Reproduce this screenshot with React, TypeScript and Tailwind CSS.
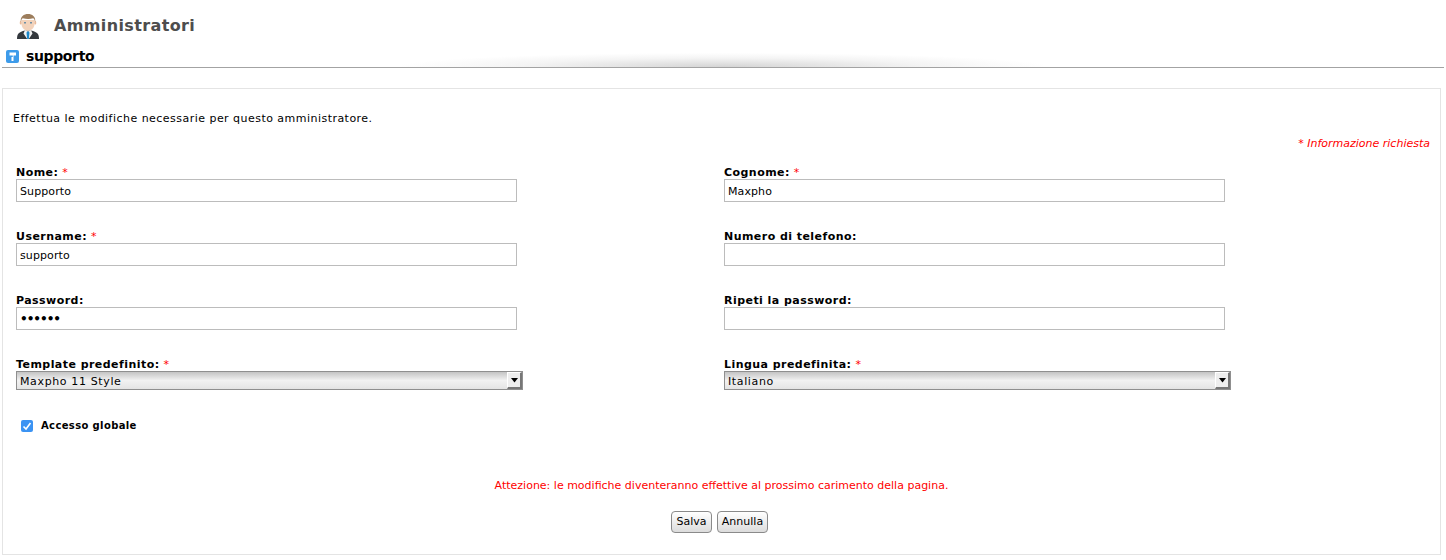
import React from 'react';

const Label: React.FC<{ text: string; required?: boolean }> = ({ text, required }) => (
    <label className="block h-[13px] text-[11px] leading-[13px] font-bold text-black tracking-[0.45px]">
        {text}
        {required && <span className="font-normal text-[#f00]"> *</span>}
    </label>
);

const Input: React.FC<{ value?: string; password?: boolean }> = ({ value = '', password }) => (
    <input
        type={password ? 'password' : 'text'}
        defaultValue={value}
        className={`block w-[501px] h-[23px] border border-[#bcbcbc] bg-white px-[3px] pt-[1px] text-black outline-none ${password ? 'text-[12px] tracking-[-1px] font-bold' : 'text-[11px] tracking-[0.1px]'}`}
    />
);

const Select: React.FC<{ value: string }> = ({ value }) => (
    <div className="flex w-[507px] h-[19px] border border-[#8f8f8f] bg-gradient-to-b from-[#c4c4c4] via-[#f2f2f2] to-[#e4e4e4] text-[11px] leading-[19px] text-black">
        <span className="flex-1 pl-[3px] tracking-[0.63px]">{value}</span>
        <span className="flex items-center justify-center w-[15px] border-l border-t border-white border-r-2 border-b-2 border-r-[#777] border-b-[#777] bg-[#eeeeee]">
            <svg width="9" height="5" viewBox="0 0 9 5"><path d="M1 0h7L4.500 4.500z" fill="#000" /></svg>
        </span>
    </div>
);

const Field: React.FC<{ children: React.ReactNode }> = ({ children }) => (
    <div className="flex flex-col h-[64px]">{children}</div>
);

export default function App() {
    return (
        <div className="w-[1446px] h-[560px] bg-white overflow-hidden text-black" style={{ fontFamily: '"DejaVu Sans", Verdana, sans-serif' }}>
            <div className="flex items-center h-[49px] pl-[16px] pt-[2px]">
                {/* avatar */}
                <svg width="24" height="26" viewBox="0 0 24 26">
                    <path d="M1 26c0-5.500 2-7 8-8.500h6c6 1.500 8 3 8 8.500z" fill="#33383d" />
                    <path d="M9 17l3 1.500 3-1.500 1.500 3.500L12.800 26h-1.600L7.500 20.500z" fill="#f2f2f2" />
                    <path d="M11 18.500h2l.5 1.500-.7 6h-1.600l-.7-6z" fill="#1b87c9" />
                    <rect x="3.800" y="8" width="2" height="3.500" rx="1" fill="#e8b999" />
                    <rect x="18.200" y="8" width="2" height="3.500" rx="1" fill="#e8b999" />
                    <path d="M5.500 7h13v4c0 3.500-3 6.800-6.500 6.800S5.500 14.500 5.500 11z" fill="#f3d3bb" />
                    <rect x="8" y="9" width="2" height="1.500" fill="#6f8fa5" />
                    <rect x="14" y="9" width="2" height="1.500" fill="#6f8fa5" />
                    <path d="M4.800 9C4 3.500 8 1 12 1s8 2.500 7.200 8c-.5-2-1-3.200-2-3.800-3 1-7 1-10.400 0-1 .6-1.500 1.800-2 3.800z" fill="#9c7d5c" />
                </svg>
                <h1 className="ml-[14px] text-[16px] leading-[20px] font-bold text-[#4d4d4d] tracking-[0.37px]">Amministratori</h1>
            </div>
            <div className="relative mx-[2px] h-[18px] border-b border-[#a3a3a3] box-content">
                <div className="absolute left-[400px] right-[400px] bottom-0 h-[14px] bg-[radial-gradient(ellipse_at_bottom,#d4d4d4_0%,#f4f4f4_45%,#ffffff_72%)]" />
                <div className="relative flex items-center h-[15px] pl-[4px]">
                    <svg width="13" height="13" viewBox="0 0 13 13">
                        <rect width="13" height="13" rx="2" fill="#3d9bea" />
                        <path d="M3.500 2.500h6.500v3H7.500v5.500H5.500V7H6.800V5.500H3.500z" fill="#fff" />
                    </svg>
                    <h2 className="ml-[7px] mb-[2px] text-[14px] leading-[18px] font-bold text-black tracking-[-0.37px]">supporto</h2>
                </div>
            </div>
            <div className="mx-[2px] mt-[20px] h-[467px] w-[1439px] border border-[#e4e4e4] flex flex-col">
                <p className="ml-[10px] mt-[23px] h-[13px] text-[11px] leading-[13px] tracking-[0.47px]">Effettua le modifiche necessarie per questo amministratore.</p>
                <p className="mt-[12px] mr-[10px] h-[13px] text-right text-[11px] leading-[13px] italic text-[#f00]">* Informazione richiesta</p>
                <div className="grid grid-cols-[708px_1fr] pl-[13px] mt-[16px]">
                    <Field><Label text="Nome:" required /><Input value="Supporto" /></Field>
                    <Field><Label text="Cognome:" required /><Input value="Maxpho" /></Field>
                    <Field><Label text="Username:" required /><Input value="supporto" /></Field>
                    <Field><Label text="Numero di telefono:" /><Input /></Field>
                    <Field><Label text="Password:" /><Input password value="secret" /></Field>
                    <Field><Label text="Ripeti la password:" /><Input /></Field>
                    <Field><Label text="Template predefinito:" required /><Select value="Maxpho 11 Style" /></Field>
                    <Field><Label text="Lingua predefinita:" required /><Select value="Italiano" /></Field>
                </div>
                <div className="flex items-center ml-[18px] mt-[-2px] h-[13px]">
                    <span className="flex items-center justify-center w-[12px] h-[12px] mb-[1px] rounded-[2px] bg-[#3b93f3]">
                        <svg width="12" height="12" viewBox="0 0 12 12"><path d="M2.500 6.500l2.500 2.500 4.500-6" fill="none" stroke="#fff" strokeWidth="1.600" /></svg>
                    </span>
                    <span className="ml-[8px] mb-[2px] text-[10px] font-bold tracking-[0.37px]">Accesso globale</span>
                </div>
                <p className="mt-[46px] h-[13px] text-center text-[11px] leading-[13px] text-[#f00]">Attezione: le modifiche diventeranno effettive al prossimo carimento della pagina.</p>
                <div className="flex justify-center gap-[5px] mt-[19px] pr-[4px]">
                    <button className="h-[22px] w-[41px] rounded-[4px] border border-[#8a8a8a] bg-gradient-to-b from-white to-[#dcdcdc] text-[11px] text-black">Salva</button>
                    <button className="h-[22px] w-[51px] rounded-[4px] border border-[#8a8a8a] bg-gradient-to-b from-white to-[#dcdcdc] text-[11px] text-black">Annulla</button>
                </div>
            </div>
        </div>
    );
}
